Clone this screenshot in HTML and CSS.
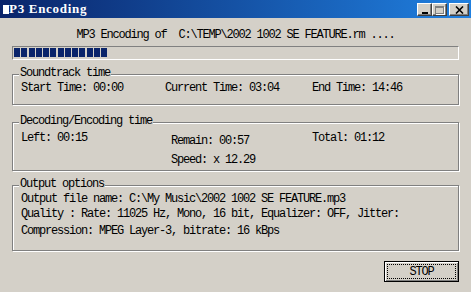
FILE: index.html
```html
<!DOCTYPE html>
<html lang="en">
<head>
    <meta charset="UTF-8">
    <meta name="viewport" content="width=device-width, initial-scale=1.0">
    <title>MP3 Encoding</title>
    <link rel="stylesheet" href="styles.css">
</head>
<body>
    <div class="window">
        <!-- Title bar -->
        <div class="titlebar">
            <span class="app-icon"></span>
            <span class="title-text">P3 Encoding</span>
            <div class="caption-buttons">
                <span class="cap-btn cap-min"><span class="min-bar"></span></span>
                <span class="cap-btn cap-max"><span class="max-box"></span></span>
                <span class="cap-btn cap-close">
                    <svg width="9" height="8" viewBox="0 0 9 8">
                        <path d="M1 0.5 L8 7.5 M8 0.5 L1 7.5" stroke="#000" stroke-width="1.6" fill="none"/>
                    </svg>
                </span>
            </div>
        </div>

        <div class="content">
            <div class="caption">MP3 Encoding of  C:\TEMP\2002 1002 SE FEATURE.rm ....</div>

            <!-- Progress -->
            <div class="progress" id="progress"></div>

            <!-- Soundtrack time -->
            <div class="group group-sound">
                <span class="group-title">Soundtrack time</span>
                <div class="sound-row">
                    <span>Start Time: 00:00</span>
                    <span>Current Time: 03:04</span>
                    <span>End Time: 14:46</span>
                </div>
            </div>

            <!-- Decoding/Encoding time -->
            <div class="group group-coding">
                <span class="group-title">Decoding/Encoding time</span>
                <div class="coding-row">
                    <span>Left: 00:15</span>
                    <div class="coding-mid">
                        <span>Remain: 00:57</span>
                        <span>Speed: x 12.29</span>
                    </div>
                    <span>Total: 01:12</span>
                </div>
            </div>

            <!-- Output options -->
            <div class="group group-output">
                <span class="group-title">Output options</span>
                <div class="opt-line">Output file name: C:\My Music\2002 1002 SE FEATURE.mp3</div>
                <div class="opt-line opt-second">Quality : Rate: 11025 Hz, Mono, 16 bit, Equalizer: OFF, Jitter:</div>
                <div class="opt-line opt-third">Compression: MPEG Layer-3, bitrate: 16 kBps</div>
            </div>

            <div class="actions">
                <button class="stop-btn" type="button"><span class="focus-rect">STOP</span></button>
            </div>
        </div>
    </div>

    <script>
        // progress chunks
        const progress = document.getElementById('progress');
        const chunks = 13;
        for (let i = 0; i < chunks; i++) {
            const chunk = document.createElement('span');
            chunk.classList.add('chunk');
            progress.appendChild(chunk);
        }
    </script>
</body>
</html>
```

FILE: styles.css
```css
body {
    margin: 0;
    padding: 0;
    background-color: #d4d0c8;
    font-family: "Liberation Mono", monospace;
    font-size: 12px;
    letter-spacing: -1.2px;
    line-height: 12px;
    color: #000;
}

.window {
    width: 471px;
    height: 292px;
    overflow: hidden;
}

.titlebar {
    height: 18px;
    display: flex;
    align-items: center;
    padding-left: 3px;
    background: linear-gradient(to right, #0a246a, #2080e0);
}

.app-icon {
    width: 6px;
    height: 9px;
    background-color: #fff;
}

.title-text {
    color: #fff;
    font-family: "Liberation Serif", serif;
    font-weight: bold;
    font-size: 13px;
    letter-spacing: 0.7px;
}

.caption-buttons {
    margin-left: auto;
    align-self: flex-start;
    margin-top: 3px;
    padding-right: 2px;
    display: flex;
}

.cap-btn {
    box-sizing: border-box;
    height: 13px;
    width: 15px;
    background-color: #d4d0c8;
    border-top: 1px solid #fff;
    border-left: 1px solid #fff;
    border-right: 1px solid #404040;
    border-bottom: 1px solid #404040;
    box-shadow: inset -1px -1px 0 #808080;
    display: flex;
    align-items: center;
    justify-content: center;
}

.cap-close {
    width: 20px;
    margin-left: 2px;
}

.min-bar {
    width: 6px;
    height: 2px;
    background-color: #000;
    margin-top: 6px;
}

.max-box {
    box-sizing: border-box;
    width: 9px;
    height: 8px;
    border: 1px solid #808080;
    border-top-width: 2px;
    box-shadow: 1px 1px 0 #fff;
}

.content {
    padding: 0 12px;
}

.caption {
    padding-top: 11px;
    text-align: center;
    white-space: pre;
}

.progress {
    box-sizing: border-box;
    margin-top: 5px;
    height: 14px;
    border: 1px solid;
    border-color: #808080 #fff #fff #808080;
    padding: 1px 1px 2px 1px;
    display: flex;
    gap: 1.25px;
}

.chunk {
    width: 6px;
    height: 9px;
    background-color: #0a246a;
}

.group {
    position: relative;
    border: 1px solid #808080;
    box-shadow: inset 1px 1px 0 #fff, 1px 1px 0 #fff;
    padding-left: 8px;
}

.group-title {
    position: absolute;
    top: -8px;
    left: 6px;
    padding: 0 1px;
    background-color: #d4d0c8;
}

.group-sound {
    margin-top: 14px;
    padding-top: 7px;
    padding-bottom: 10px;
}

.sound-row {
    display: grid;
    grid-template-columns: 144px 147px auto;
}

.group-coding {
    margin-top: 17px;
    padding-top: 9px;
    padding-bottom: 4px;
}

.coding-row {
    display: grid;
    grid-template-columns: 150px 141px auto;
    align-items: start;
}

.coding-mid {
    grid-column: 2;
    display: flex;
    flex-direction: column;
    gap: 7px;
    padding-top: 3px;
}

.group-output {
    margin-top: 14px;
    padding-top: 7px;
    padding-bottom: 13px;
}

.opt-line {
    white-space: pre;
}

.opt-second {
    margin-top: 3px;
}

.opt-third {
    margin-top: 5px;
}

.actions {
    display: flex;
    justify-content: flex-end;
    margin-top: 10px;
}

.stop-btn {
    box-sizing: border-box;
    width: 75px;
    height: 21px;
    padding: 2px;
    margin: 0;
    border: 1px solid #000;
    background-color: #d4d0c8;
    box-shadow: inset 1px 1px 0 #fff, inset -1px -1px 0 #808080;
    font: inherit;
    letter-spacing: inherit;
    display: flex;
}

.focus-rect {
    flex: 1;
    border: 1px dotted #000;
    display: flex;
    align-items: center;
    justify-content: center;
}
```
